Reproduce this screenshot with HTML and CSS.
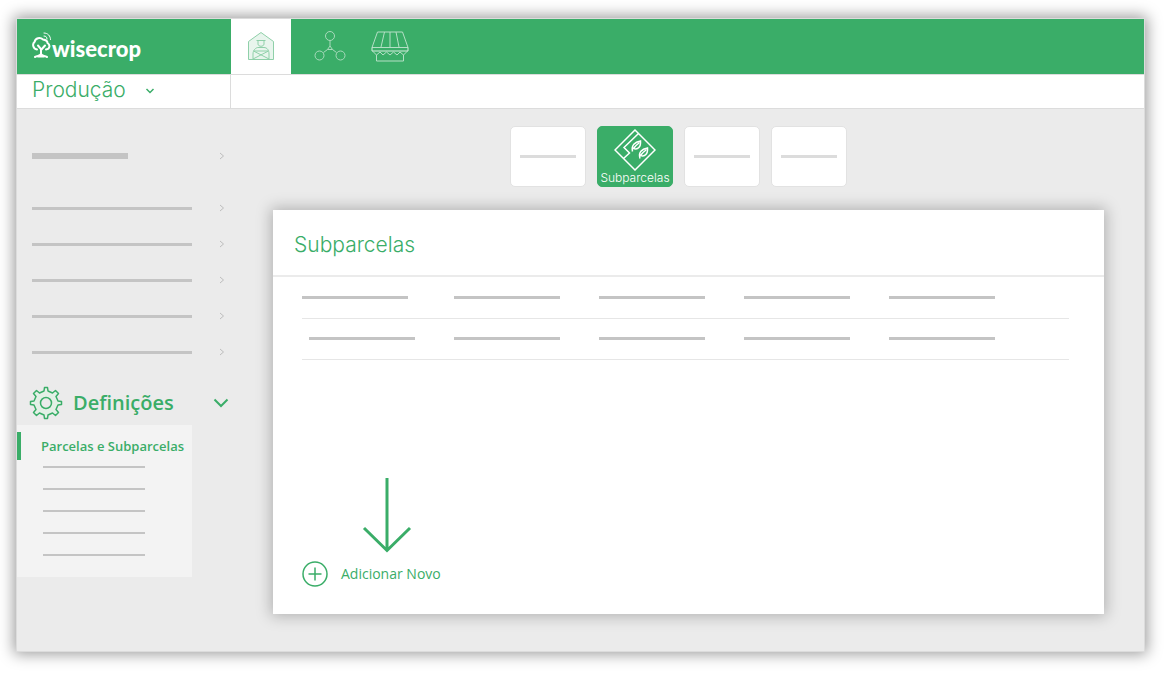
FILE: index.html
```html
<!DOCTYPE html>
<html lang="pt">
<head>
    <meta charset="UTF-8">
    <meta name="viewport" content="width=device-width, initial-scale=1.0">
    <title>Wisecrop - Subparcelas</title>
    <link rel="stylesheet" href="styles.css">
</head>
<body>
    <div class="app">
        <header class="topbar">
            <a class="brand" href="#">
                <svg width="20" height="27" viewBox="0 0 20 27" fill="none" stroke="#fff" stroke-width="2" stroke-linecap="round">
                    <path d="M5 17.500C1 17 0 12 2.500 10C3.500 6 8 5 11 7.500C14 8 15.500 9 15.500 11C18.500 13 18 17 14 17.500"/>
                    <path d="M3 25C6 23.500 8 24 9 22V17L6 13.500M9 18L13 13.500M9 22C10 24 12 23.500 15 25M6 24.500H12"/>
                    <path d="M12 4C14 4 15 5 15 7M12 1C16 1 18.500 4 18.500 7.500" stroke-width="1"/>
                </svg>
                <span>wisecrop</span>
            </a>
            <nav class="tabs">
                <a class="tab active" href="#" aria-label="Produção">
                    <svg width="28" height="30" viewBox="0 0 28 30" fill="none" stroke="#8fd0a9">
                        <path d="M1.500 10.500L14 1.500L26.500 10.500V28.500H1.500Z" fill="#e8f5ed"/>
                        <path d="M11 9.500H17V13C17 16 11 16 11 13ZM9.500 9.500H18.500"/>
                        <path d="M6 28V23C6 19 9 16.500 11 16.500H17C20 16.500 22 19 22 23V28M6.500 20L22 28M21.500 20L6 28M7 20H21"/>
                    </svg>
                </a>
                <a class="tab" href="#" aria-label="Rede">
                    <svg width="32" height="30" viewBox="0 0 32 30" fill="none" stroke="#a9dabc">
                        <circle cx="16" cy="5" r="4.500"/>
                        <circle cx="5.500" cy="24.500" r="4.500"/>
                        <circle cx="26.500" cy="24.500" r="4.500"/>
                        <path d="M16 9.500V15L13.500 18.500H18.500L16 15M13.500 18.500L9.500 21.500M18.500 18.500L22.500 21.500"/>
                    </svg>
                </a>
                <a class="tab" href="#" aria-label="Mercado">
                    <svg width="38" height="31" viewBox="0 0 38 31" fill="none" stroke="#b4dfc5">
                        <path d="M6.500 1H31.500L37 16.500H1L6.500 1ZM13.500 1L10 16M19 1V16M25 1L28 16"/>
                        <path d="M1 16.500V20H37V16.500" stroke="#d5eede"/>
                        <path d="M1.500 20L5.500 24L9 21L12 24L15.500 21L19 24L22.500 21L26 24L29 21L32.500 24L36.500 20M5.500 24V30H32.500V24"/>
                    </svg>
                </a>
            </nav>
        </header>

        <div class="subbar">
            <div class="module">
                <select class="module-select" aria-label="Módulo">
                    <option>Produção</option>
                </select>
                <svg class="module-arrow" width="10" height="6" viewBox="0 0 10 6" fill="none" stroke="#3aad68" stroke-width="1.500"><path d="M1.500 1L5 4.500L8.500 1"/></svg>
            </div>
        </div>

        <div class="content">
            <aside class="sidebar">
                <nav>
                    <a class="menu-item first" href="#" aria-label="Menu"><span class="line"></span><svg class="chevron" viewBox="0 0 6 8"><path d="M1 1L4.500 4L1 7"/></svg></a>
                    <a class="menu-item" href="#" aria-label="Menu"><span class="line"></span><svg class="chevron" viewBox="0 0 6 8"><path d="M1 1L4.500 4L1 7"/></svg></a>
                    <a class="menu-item" href="#" aria-label="Menu"><span class="line"></span><svg class="chevron" viewBox="0 0 6 8"><path d="M1 1L4.500 4L1 7"/></svg></a>
                    <a class="menu-item" href="#" aria-label="Menu"><span class="line"></span><svg class="chevron" viewBox="0 0 6 8"><path d="M1 1L4.500 4L1 7"/></svg></a>
                    <a class="menu-item" href="#" aria-label="Menu"><span class="line"></span><svg class="chevron" viewBox="0 0 6 8"><path d="M1 1L4.500 4L1 7"/></svg></a>
                    <a class="menu-item" href="#" aria-label="Menu"><span class="line"></span><svg class="chevron" viewBox="0 0 6 8"><path d="M1 1L4.500 4L1 7"/></svg></a>

                    <button class="settings" type="button">
                        <svg width="34" height="34" viewBox="0 0 34 34" fill="#e3f0e6" stroke="#3aad68" stroke-width="1.500" stroke-linejoin="round">
                            <path d="M15 5L15.500 1.500H18.500L19 5L23.500 7L26.500 4.500L29.500 7.500L27 10.500L29 15L32.500 15.500V18.500L29 19L27 23.500L29.500 26.500L26.500 29.500L23.500 27L19 29L18.500 32.500H15.500L15 29L10.500 27L7.500 29.500L4.500 26.500L7 23.500L5 19L1.500 18.500V15.500L5 15L7 10.500L4.500 7.500L7.500 4.500L10.500 7Z"/>
                            <circle cx="17" cy="17" r="5.500" fill="#ebebeb"/>
                        </svg>
                        <span>Definições</span>
                        <svg class="settings-arrow" width="16" height="10" viewBox="0 0 16 10" fill="none" stroke="#3aad68" stroke-width="2"><path d="M1.500 1.500L8 8L14.500 1.500"/></svg>
                    </button>

                    <div class="submenu">
                        <a class="submenu-active" href="#">Parcelas e Subparcelas</a>
                        <div class="submenu-lines">
                            <span class="line"></span>
                            <span class="line"></span>
                            <span class="line"></span>
                            <span class="line"></span>
                            <span class="line"></span>
                        </div>
                    </div>
                </nav>
            </aside>

            <main class="main">
                <div class="tiles">
                    <button class="tile" type="button" aria-label="Opção"><span class="line"></span></button>
                    <button class="tile selected" type="button">
                        <svg width="42" height="42" viewBox="0 0 42 42" fill="none" stroke="#fff" stroke-width="1.500">
                            <path d="M21 1L41 21L21 41L1 21Z"/>
                            <path d="M24.500 4.500L10 18.500L15.500 24L9.500 29.500"/>
                            <path d="M18.500 22.500C17 16 21 13 26.500 12C27 18 24 21 19.500 19.500C21 17 23 15.500 25 14"/>
                            <path d="M26 29.500C24 23 28 20 33.500 19C34 25 31 28 26.500 26.500C28 24 30 22.500 32 21"/>
                        </svg>
                        <span>Subparcelas</span>
                    </button>
                    <button class="tile" type="button" aria-label="Opção"><span class="line"></span></button>
                    <button class="tile" type="button" aria-label="Opção"><span class="line"></span></button>
                </div>

                <section class="card">
                    <h1>Subparcelas</h1>
                    <div class="card-body">
                        <table>
                            <tr>
                                <td><span class="line"></span></td>
                                <td><span class="line"></span></td>
                                <td><span class="line"></span></td>
                                <td><span class="line"></span></td>
                                <td><span class="line"></span></td>
                            </tr>
                            <tr>
                                <td class="indent"><span class="line"></span></td>
                                <td><span class="line"></span></td>
                                <td><span class="line"></span></td>
                                <td><span class="line"></span></td>
                                <td><span class="line"></span></td>
                            </tr>
                        </table>
                        <svg class="arrow-down" width="50" height="76" viewBox="0 0 50 76" fill="none" stroke="#3aad68" stroke-width="3">
                            <path d="M25 1V73M2 51L25 73.500L48 51"/>
                        </svg>
                        <button class="add" type="button">
                            <svg width="26" height="26" viewBox="0 0 26 26" fill="none" stroke="#3aad68" stroke-width="1.500"><circle cx="13" cy="13" r="12"/><path d="M13 6.500V19.500M6.500 13H19.500"/></svg>
                            <span>Adicionar Novo</span>
                        </button>
                    </div>
                </section>
            </main>
        </div>
    </div>
</body>
</html>
```
FILE: styles.css
```css
* { box-sizing: border-box; }
body { margin: 0; padding: 18px 22px 21px 16px; background: #fff; font-family: "Open Sans", sans-serif; color: #3aad68; }
a { color: inherit; text-decoration: none; }
button { border: 0; padding: 0; background: none; color: inherit; font-family: inherit; cursor: pointer; }
svg { display: block; flex: none; }
.line { display: block; height: 3px; background: #c4c4c4; }

.app { background: #ebebeb; border: 1px solid #dcdcdc; box-shadow: 0 0 14px 2px rgba(0, 0, 0, 0.4); }

/* barra superior */
.topbar { display: flex; height: 55px; background: #3aad68; }
.brand { display: flex; align-items: center; width: 214px; padding: 0 0 2px 15px; color: #fff; font: 900 22px/28px Lato, sans-serif; }
.brand span { padding-top: 6px; }
.tabs { display: flex; }
.tab { display: flex; align-items: center; justify-content: center; width: 60px; padding-bottom: 1px; }
.tab.active { background: #fff; }
.tab.active + .tab { margin-left: 9px; }

.subbar { height: 35px; background: #fff; border-top: 1px solid #dcdcdc; border-bottom: 1px solid #dcdcdc; }
.module { position: relative; width: 214px; height: 33px; border-right: 1px solid #dcdcdc; }
.module-select { width: 100%; height: 30px; padding: 0 0 0 15px; border: 0; background: none; appearance: none; color: #3aad68; font: 300 21px/28px Inter, sans-serif; cursor: pointer; }
.module-arrow { position: absolute; left: 128px; top: 13px; pointer-events: none; }

.content { display: flex; }

/* menu lateral */
.sidebar { width: 214px; flex: none; padding-top: 29px; }
.menu-item { display: flex; align-items: center; justify-content: space-between; height: 36px; padding: 0 6px 0 15px; }
.menu-item .line { width: 160px; }
.menu-item.first { margin-bottom: 16px; }
.menu-item.first .line { width: 96px; height: 6px; }
.chevron { width: 6px; height: 8px; fill: none; stroke: #bdbdbd; }
.settings { display: flex; align-items: center; width: 100%; height: 44px; margin-top: 11px; padding-left: 12px; font-size: 20px; line-height: 28px; font-weight: 600; }
.settings span { margin-left: 10px; }
.settings-arrow { margin-left: auto; margin-right: 2px; }
.submenu { width: 175px; padding: 7px 0 21px; background: #f3f3f3; }
.submenu-active { display: block; padding-left: 20px; border-left: 4px solid #3aad68; font-size: 13px; line-height: 28px; font-weight: 600; white-space: nowrap; }
.submenu-lines { display: grid; gap: 20px; padding: 6px 0 0 26px; }
.submenu-lines .line { width: 102px; height: 2px; }

.main { flex: 1; min-width: 0; padding: 17px 40px 37px 42px; }
.tiles { display: flex; justify-content: center; gap: 11px; padding-right: 20px; }
.tile { display: flex; flex-direction: column; align-items: center; justify-content: center; width: 76px; height: 61px; background: #fff; border: 1px solid #e2e2e2; border-radius: 5px; }
.tile .line { width: 56px; background: #dcdcdc; }
.tile.selected { background: #3aad68; border-color: #3aad68; color: #fff; font: 300 12px/14px Inter, sans-serif; }

.card { margin-top: 23px; padding-bottom: 27px; background: #fff; box-shadow: 0 0 14px 2px rgba(0, 0, 0, 0.25); }
.card h1 { margin: 0; padding: 21px 21px 16px; border-bottom: 2px solid #ebebeb; font: 300 21px/28px Inter, sans-serif; }
.card-body { padding: 0 35px 0 29px; }
table { width: 100%; border-collapse: collapse; table-layout: fixed; }
td { width: 145px; height: 41px; padding: 0; border-bottom: 1px solid #e6e6e6; }
td:first-child { width: 152px; }
td:last-child { width: auto; }
td.indent { padding-left: 7px; }
td .line { width: 106px; }
.arrow-down { margin: 117px 0 8px 60px; }
.add { display: flex; align-items: center; gap: 13px; font-size: 14px; line-height: 20px; }
```
